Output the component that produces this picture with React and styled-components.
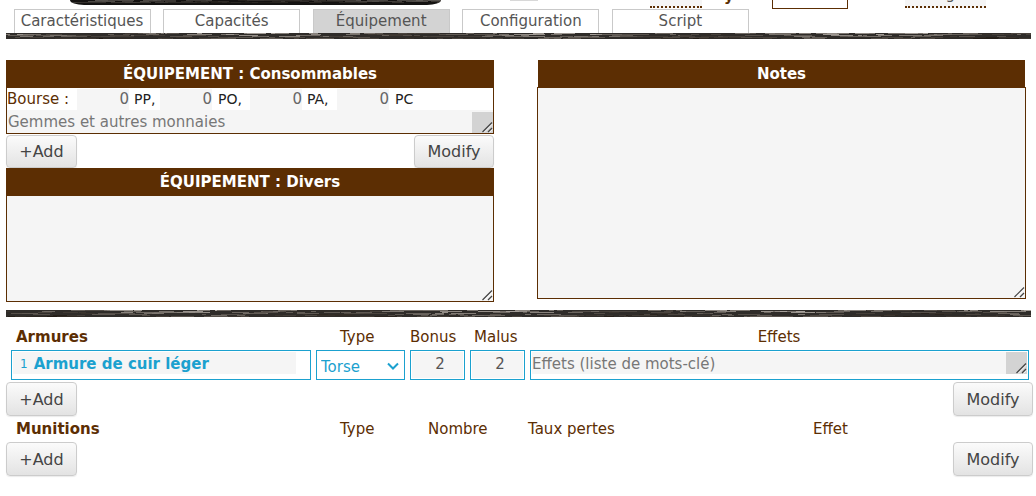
// App.jsx
import React from 'react';
import styled, { createGlobalStyle } from 'styled-components';

const BROWN = '#5c2e03';
const CYAN = '#1ba1cf';

const GlobalStyle = createGlobalStyle`
  html, body {
    margin: 0;
    padding: 0;
    background: #fff;
    font-family: "DejaVu Sans", Verdana, sans-serif;
    overflow: hidden;
  }
  * { box-sizing: border-box; }
`;

const Page = styled.div`
  width: 1036px;
  height: 496px;
  overflow: hidden;
`;

// Haut de page coupe par le screenshot
const TopClip = styled.div`
  height: 9px;
  display: flex;
  align-items: flex-start;
  overflow: hidden;
  padding-left: 70px;
`;

const Banner = styled.div`
  width: 371px;
  height: 5px;
  flex: none;
  overflow: hidden;
  border-radius: 0 0 14px 14px / 0 0 5px 5px;
  background: #141312;
  svg { display: block; opacity: 0.45; }
`;

const Sliver = styled.div`
  width: 28px;
  height: 1px;
  flex: none;
  margin-left: 69px;
  background: #d8d8d8;
`;

const ClippedField = styled.div`
  width: ${(p) => p.$w}px;
  height: 8px;
  flex: none;
  margin-left: ${(p) => p.$ml}px;
  background: #f5f5f5;
  border-bottom: 2px dotted ${BROWN};
  display: flex;
  justify-content: ${(p) => (p.$pl ? 'flex-start' : 'center')};
  align-items: flex-end;
  overflow: hidden;
  padding-left: ${(p) => p.$pl || 0}px;
  padding-bottom: 4px;
  color: #555;
  font-size: 15px;
  line-height: 16px;
`;

const ClippedBox = styled(ClippedField)`
  background: #fff;
  border: 1px solid ${BROWN};
  border-top: none;
  height: 9px;
  justify-content: flex-start;
  padding-left: 11px;
  padding-bottom: 5px;
`;

const ClippedLabel = styled.div`
  flex: none;
  width: 48px;
  margin-left: 22px;
  height: 9px;
  display: flex;
  align-items: flex-end;
  overflow: hidden;
  padding-bottom: 6px;
  color: ${BROWN};
  font-size: 15px;
  font-weight: bold;
  line-height: 14px;
`;

const TabBar = styled.div`
  display: flex;
  gap: 12.6px;
  height: 24px;
  padding-left: 13.5px;
`;

const Tab = styled.div`
  width: 137px;
  border: 1px solid #c9c9c9;
  border-bottom: none;
  background: ${(p) => (p.$active ? '#d3d3d3' : '#fff')};
  color: #555;
  font-size: 15px;
  line-height: 23px;
  text-align: center;
`;

const StripBox = styled.svg`
  display: block;
  width: 1025px;
  margin-left: 6px;
  height: ${(p) => p.$h}px;
`;

// texture pierre : bruit pseudo aleatoire
const makeSpecks = (seed, width, rows) => {
  let s = seed;
  const rnd = () => {
    s = (s * 16807) % 2147483647;
    return s / 2147483647;
  };
  const out = [];
  for (let x = 0; x < width; ) {
    const w = 4 + Math.floor(rnd() * 22);
    const y = Math.floor(rnd() * rows);
    // zones sombres et zones claires le long de la bande
    const wave = Math.sin(x / 47 + seed) * 0.5 + 0.5;
    // plus sombre vers le bas de la bande
    const fade = 1 - (y / rows) * 0.55;
    const g = Math.floor((45 + rnd() * 70 + wave * 70) * fade);
    out.push({ x, y, w, g });
    x += Math.max(2, Math.floor(w * 0.3));
  }
  return out;
};

const Speckle = ({ seed, width, rows }) =>
  makeSpecks(seed, width, rows).map((d, i) => (
    <rect key={i} x={d.x} y={d.y} width={d.w} height="1" fill={`rgb(${d.g + 6},${d.g},${d.g - 6})`} />
  ));

const Strip = ({ seed, h }) => (
  <StripBox $h={h} viewBox={`0 0 1025 ${h}`} preserveAspectRatio="none">
    <rect width="1025" height={h} fill="#2f2c29" />
    <Speckle seed={seed} width={1025} rows={h} />
  </StripBox>
);

const Panels = styled.div`
  display: grid;
  grid-template-columns: 488px 489px;
  column-gap: 43px;
  padding: 21px 0 0 6px;
  height: 271px;
`;

const Column = styled.div`
  display: flex;
  flex-direction: column;
`;

const PanelTitle = styled.div`
  height: 28px;
  flex: none;
  margin: ${(p) => (p.$inset ? '0 1px' : '0')};
  background: ${BROWN};
  color: #fff;
  font-size: 15px;
  font-weight: bold;
  line-height: 28px;
  text-align: center;
`;

const Framed = styled.div`
  position: relative;
  flex: none;
  border: 1px solid ${BROWN};
  border-top: ${(p) => (p.$noTop ? 'none' : `1px solid ${BROWN}`)};
  margin-top: ${(p) => (p.$overlap ? '-1px' : '0')};
  height: ${(p) => p.$h}px;
  background: #fff;
  display: flex;
  flex-direction: column;
`;

const Purse = styled.div`
  display: flex;
  align-items: center;
  height: 22px;
  flex: none;
  color: #222;
  font-size: 15px;
`;

const PurseLabel = styled.span`
  color: ${BROWN};
  width: 70px;
  flex: none;
`;

const Coin = styled.input`
  width: 52px;
  height: 21px;
  margin-right: ${(p) => p.$gap}px;
  flex: none;
  border: none;
  padding: 0;
  outline: none;
  background: #f5f5f5;
  color: #666;
  font: inherit;
  text-align: right;
`;

const CoinName = styled.span`
  width: ${(p) => p.$w}px;
  flex: none;
  font-size: 14px;
`;

const Area = styled.textarea`
  display: block;
  flex: 1;
  width: 100%;
  min-height: 0;
  resize: none;
  border: none;
  outline: none;
  padding: ${(p) => (p.$small ? '2px 1px 0' : '2px')};
  padding-left: ${(p) => (p.$tight ? 0 : '')};
  margin: 0;
  background: #f5f5f5;
  font-family: inherit;
  font-size: 15px;
  line-height: 20px;
  color: #333;
  overflow: hidden;
  &::placeholder { color: #777; opacity: 1; }
`;

const GripBox = styled.div`
  position: absolute;
  right: ${(p) => (p.$inRow ? 1 : 0)}px;
  top: ${(p) => (p.$inRow ? '1px' : 'auto')};
  bottom: ${(p) => (p.$inRow ? 5 : 0)}px;
  width: ${(p) => (p.$shaded ? 21 : 13)}px;
  height: ${(p) => (p.$inRow ? 'auto' : p.$shaded ? '21px' : '13px')};
  background: ${(p) => (p.$shaded ? '#d3d3d3' : 'transparent')};
  pointer-events: none;
  svg { position: absolute; right: 0; bottom: 0; display: block; }
`;

const Grip = ({ shaded, inRow }) => (
  <GripBox $shaded={shaded} $inRow={inRow}>
    <svg width="13" height="13" viewBox="0 0 13 13">
      <path d="M2.5 12 L12 2.5" stroke="#444" strokeWidth="1.2" />
      <path d="M8 12 L12 8" stroke="#444" strokeWidth="1.2" />
      <path d="M4 12.5 L12.5 4" stroke="#fff" strokeWidth="0.7" />
      <path d="M9.5 12.5 L12.5 9.5" stroke="#fff" strokeWidth="0.7" />
    </svg>
  </GripBox>
);

const ButtonRow = styled.div`
  display: flex;
  justify-content: space-between;
  padding: ${(p) => p.$pad || '0'};
  flex: none;
`;

const Btn = styled.button`
  height: ${(p) => p.$h || 34}px;
  width: ${(p) => p.$w}px;
  padding: 0;
  border: 1px solid #ccc;
  border-radius: 4px;
  background: linear-gradient(#fbfbfb, #e3e3e3);
  box-shadow: 0 1px 1px rgba(0, 0, 0, 0.08);
  color: #444;
  font-family: inherit;
  font-size: 16px;
`;

const SectionBar = styled.div`
  padding: 6px 0 0 0;
`;

const HeadRow = styled.div`
  display: grid;
  grid-template-columns: ${(p) => p.$cols};
  padding-left: 16px;
  padding-bottom: ${(p) => p.$pb || 0}px;
  height: ${(p) => p.$h}px;
  align-items: center;
  color: ${BROWN};
  font-size: 15px;
`;

const HeadTitle = styled.b`
  font-weight: bold;
`;

const HeadCenter = styled.span`
  text-align: center;
`;

const ItemRow = styled.div`
  display: grid;
  grid-template-columns: 300px 89px 55px 55px 499px;
  grid-template-rows: 30px;
  column-gap: 5px;
  padding-left: 11px;
  height: 30px;
`;

const NameCell = styled.div`
  border: 1px solid ${CYAN};
  padding: 1px 14px 5px 1px;
  display: flex;
  min-height: 0;
`;

const NameInner = styled.div`
  flex: 1;
  background: #f5f5f5;
  color: ${CYAN};
  padding: 2px 0 0 7px;
  display: flex;
  align-items: center;
  gap: 6px;
`;

const Rank = styled.span`
  font-size: 12px;
`;

const ItemName = styled.b`
  font-size: 15px;
  font-weight: bold;
`;

const SelectWrap = styled.div`
  position: relative;
  height: 30px;
  svg { position: absolute; left: 71px; top: 12px; pointer-events: none; }
`;

const TypeSelect = styled.select`
  appearance: none;
  display: block;
  border: 1px solid ${CYAN};
  border-radius: 0;
  background: #fff;
  color: ${CYAN};
  font-family: inherit;
  font-size: 15px;
  padding: 3px 0 0 4px;
  outline: none;
  width: 100%;
  height: 30px;
`;

const NumCell = styled.div`
  border: 1px solid ${CYAN};
  padding: 1px;
  display: flex;
  min-height: 0;
`;

const NumInput = styled.input`
  width: 100%;
  min-width: 0;
  border: none;
  outline: none;
  padding: 0 0 3px 5px;
  background: #f5f5f5;
  color: #555;
  font-family: inherit;
  font-size: 15px;
  text-align: center;
`;

const EffectsCell = styled.div`
  position: relative;
  border: 1px solid ${CYAN};
  padding: 1px 1px 5px 1px;
  display: flex;
  min-height: 0;
`;

const tabs = ['Caractéristiques', 'Capacités', 'Équipement', 'Configuration', 'Script'];

const App = () => (
  <Page>
    <GlobalStyle />
    <TopClip>
      <Banner>
        <svg width="371" height="5" viewBox="0 0 371 5">
          <Speckle seed={4242} width={371} rows={3} />
        </svg>
      </Banner>
      <Sliver />
      <ClippedField $w={52} $ml={112}>2</ClippedField>
      <ClippedLabel>y</ClippedLabel>
      <ClippedBox $w={76} $ml={0}>40</ClippedBox>
      <ClippedField $w={81} $ml={57} $pl={8}>40 kg</ClippedField>
    </TopClip>
    <TabBar>
      {tabs.map((t) => (
        <Tab key={t} $active={t === 'Équipement'}>{t}</Tab>
      ))}
    </TabBar>
    <Strip seed={1234} h={6} />

    <Panels>
      <Column>
        <PanelTitle>ÉQUIPEMENT : Consommables</PanelTitle>
        <Framed $noTop $h={46}>
          <Purse>
            <PurseLabel>Bourse :</PurseLabel>
            <Coin readOnly value="0" $gap={5} />
            <CoinName $w={26}>PP,</CoinName>
            <Coin readOnly value="0" $gap={6} />
            <CoinName $w={32}>PO,</CoinName>
            <Coin readOnly value="0" $gap={5} />
            <CoinName $w={30}>PA,</CoinName>
            <Coin readOnly value="0" $gap={6} />
            <CoinName $w={24}>PC</CoinName>
          </Purse>
          <Area $small placeholder="Gemmes et autres monnaies" />
          <Grip shaded />
        </Framed>
        <ButtonRow $pad="1px 0 0">
          <Btn $w={71} $h={33}>+Add</Btn>
          <Btn $w={80} $h={33}>Modify</Btn>
        </ButtonRow>
        <PanelTitle>ÉQUIPEMENT : Divers</PanelTitle>
        <Framed $noTop $h={106}>
          <Area />
          <Grip />
        </Framed>
      </Column>
      <Column>
        <PanelTitle $inset>Notes</PanelTitle>
        <Framed $overlap $h={212}>
          <Area />
          <Grip />
        </Framed>
      </Column>
    </Panels>

    <Strip seed={777} h={7} />

    <SectionBar>
      <HeadRow $h={27} $cols="324px 70px 64px 54px 502px">
        <HeadTitle>Armures</HeadTitle>
        <span>Type</span>
        <span>Bonus</span>
        <span>Malus</span>
        <HeadCenter>Effets</HeadCenter>
      </HeadRow>
      <ItemRow>
        <NameCell>
          <NameInner>
            <Rank>1</Rank>
            <ItemName>Armure de cuir léger</ItemName>
          </NameInner>
        </NameCell>
        <SelectWrap>
          <TypeSelect defaultValue="Torse">
            <option>Torse</option>
          </TypeSelect>
          <svg width="12" height="8" viewBox="0 0 12 8">
            <path d="M1 1.5 L6 6.5 L11 1.5" fill="none" stroke={CYAN} strokeWidth="2" />
          </svg>
        </SelectWrap>
        <NumCell><NumInput readOnly value="2" /></NumCell>
        <NumCell><NumInput readOnly value="2" /></NumCell>
        <EffectsCell>
          <Area $small $tight placeholder="Effets (liste de mots-clé)" />
          <Grip shaded inRow />
        </EffectsCell>
      </ItemRow>
      <ButtonRow $pad="2px 3px 0 6px">
        <Btn $w={71}>+Add</Btn>
        <Btn $w={80}>Modify</Btn>
      </ButtonRow>
      <HeadRow $h={26} $pb={1} $cols="324px 88px 100px 285px 100px">
        <HeadTitle>Munitions</HeadTitle>
        <span>Type</span>
        <span>Nombre</span>
        <span>Taux pertes</span>
        <span>Effet</span>
      </HeadRow>
      <ButtonRow $pad="0 3px 0 6px">
        <Btn $w={71}>+Add</Btn>
        <Btn $w={80}>Modify</Btn>
      </ButtonRow>
    </SectionBar>
  </Page>
);

export default App;
